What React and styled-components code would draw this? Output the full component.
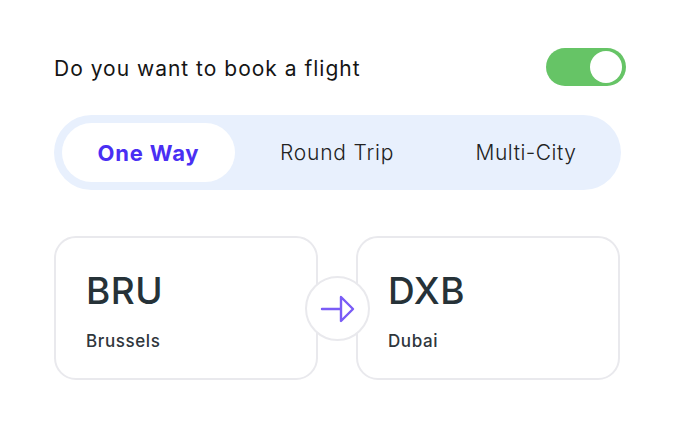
import React, { useState } from 'react'
import styled, { createGlobalStyle } from 'styled-components'

const GlobalStyle = createGlobalStyle`
  body {
    margin: 0;
    background: #ffffff;
    font-family: 'Inter', 'Noto Sans', sans-serif;
  }
`

const Page = styled.div`
  width: 686px;
  height: 428px;
  box-sizing: border-box;
  padding: 48px 60px 0 54px;
`

const Header = styled.div`
  display: flex;
  align-items: center;
  justify-content: space-between;
  height: 38px;
`

const Title = styled.div`
  font-size: 21px;
  color: #151515;
  letter-spacing: 1px;
  padding-top: 2px;
`

const Toggle = styled.button`
  position: relative;
  width: 80px;
  height: 38px;
  border: none;
  padding: 0;
  border-radius: 19px;
  background: ${(p) => (p.$on ? '#66c466' : '#d5d7dc')};
  cursor: pointer;
`

const Knob = styled.span`
  position: absolute;
  top: 3px;
  left: ${(p) => (p.$on ? '44px' : '3px')};
  width: 32px;
  height: 32px;
  border-radius: 50%;
  background: #ffffff;
`

const Segmented = styled.div`
  display: flex;
  margin-top: 29px;
  width: 567px;
  box-sizing: border-box;
  padding: 8px;
  height: 75px;
  border-radius: 38px;
  background: #e8f0fd;
`

const Tab = styled.button`
  width: ${(p) => p.$w}px;
  flex: none;
  border: none;
  border-radius: 30px;
  background: ${(p) => (p.$active ? '#ffffff' : 'transparent')};
  color: ${(p) => (p.$active ? '#4a2ff3' : '#222222')};
  font-family: inherit;
  font-size: ${(p) => (p.$active ? '22px' : '21px')};
  font-weight: ${(p) => (p.$active ? 700 : 300)};
  letter-spacing: ${(p) => p.$ls}px;
  cursor: pointer;
`

const Route = styled.div`
  position: relative;
  display: flex;
  gap: 38px;
  margin-top: 46px;
  width: 567px;
`

const Card = styled.div`
  width: 264px;
  height: 144px;
  box-sizing: border-box;
  padding: 31px 30px 0 30px;
  border: 2px solid #e9e9ed;
  border-radius: 22px;
`

const Code = styled.div`
  font-size: 37px;
  font-weight: 500;
  letter-spacing: 0.5px;
  color: #263238;
  line-height: 44px;
`

const City = styled.div`
  margin-top: 18px;
  font-size: 17px;
  font-weight: 500;
  letter-spacing: 0.6px;
  color: #2f363c;
`

const Swap = styled.button`
  position: absolute;
  left: 251px;
  top: 40px;
  width: 65px;
  height: 65px;
  border-radius: 50%;
  border: 2px solid #e9e9ed;
  background: #ffffff;
  display: flex;
  align-items: center;
  justify-content: center;
  padding: 0;
  cursor: pointer;
`

const tabs = [
  { label: 'One Way', w: 173, ls: 0.8 },
  { label: 'Round Trip', w: 204, ls: 0.8 },
  { label: 'Multi-City', w: 174, ls: 0.5 },
]

const App = () => {
  const [on, setOn] = useState(true)
  const [active, setActive] = useState(0)

  return (
    <Page>
      <GlobalStyle />
      <Header>
        <Title>Do you want to book a flight</Title>
        <Toggle $on={on} onClick={() => setOn(!on)}>
          <Knob $on={on} />
        </Toggle>
      </Header>

      <Segmented>
        {tabs.map((t, i) => (
          <Tab
            key={t.label}
            $w={t.w}
            $ls={t.ls}
            $active={active === i}
            onClick={() => setActive(i)}
          >
            {t.label}
          </Tab>
        ))}
      </Segmented>

      <Route>
        <Card>
          <Code>BRU</Code>
          <City>Brussels</City>
        </Card>
        <Card>
          <Code>DXB</Code>
          <City>Dubai</City>
        </Card>
        <Swap>
          <svg width="36" height="28" viewBox="0 0 36 28" fill="none">
            <path
              d="M2 14 H21 M21 2 L33 14 L21 26 Z"
              stroke="#7a5cf6"
              strokeWidth="2.4"
              strokeLinejoin="round"
              strokeLinecap="round"
            />
          </svg>
        </Swap>
      </Route>
    </Page>
  )
}

export default App
